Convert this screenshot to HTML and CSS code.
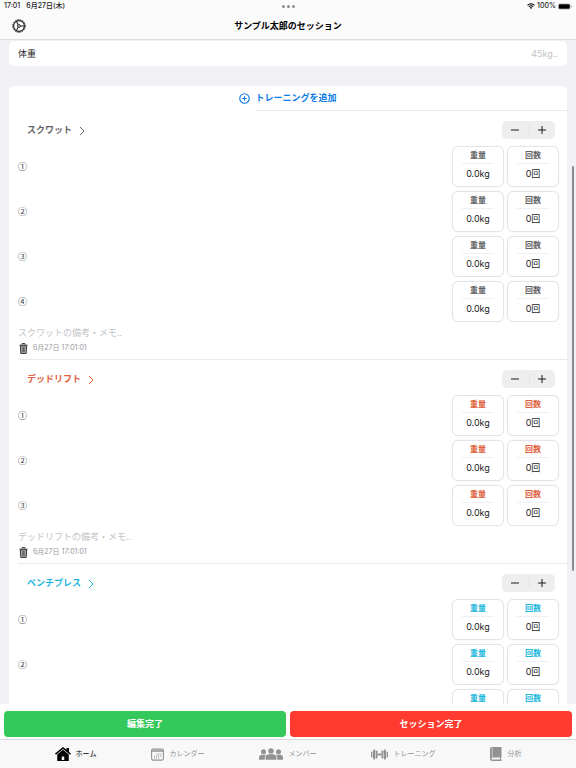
FILE: index.html
```html
<!DOCTYPE html>
<html lang="ja">
<head>
    <meta charset="UTF-8">
    <meta name="viewport" content="width=device-width, initial-scale=1.0">
    <title>サンプル太郎のセッション</title>
    <link rel="stylesheet" href="styles.css">
</head>
<body>
    <div class="app">
        <header class="header">
            <div class="status-bar">
                <div class="status-left"><span>17:01</span><span>6月27日(木)</span></div>
                <div class="status-dots"><i></i><i></i><i></i></div>
                <div class="status-right">
                    <svg class="wifi" viewBox="0 0 16 12" fill="none" stroke="#111" stroke-width="2.2"><path d="M1 4.6a10 10 0 0 1 14 0M3.8 7.6a6 6 0 0 1 8.4 0"/><path d="M5.6 9.3a3.4 3.4 0 0 1 4.8 0L8 11.8z" fill="#111" stroke="none"/></svg>
                    <span>100%</span>
                    <svg class="battery" viewBox="0 0 28 12"><rect x=".5" y=".5" width="24" height="11" rx="3" fill="none" stroke="#999"/><rect x="1.500" y="1.500" width="22" height="9" rx="2" fill="#000"/><path d="M26 4v4q1.600-.5 1.600-2T26 4z" fill="#999"/></svg>
                </div>
            </div>
            <div class="title-bar">
                <button class="icon-btn" aria-label="設定">
                    <svg class="gear" viewBox="0 0 26 26" fill="none" stroke="#1c1c1e"><circle cx="13" cy="13" r="11.600" stroke-width="1.800" stroke-dasharray="3 1.550"/><circle cx="13" cy="13" r="10" stroke-width="2"/><circle cx="13" cy="13" r="2.600" stroke-width="1.800"/><path d="M15.800 13h6.800M11.600 10.600 8.200 4.700M11.600 15.400l-3.400 5.900" stroke-width="1.900"/></svg>
                </button>
                <h1>サンプル太郎のセッション</h1>
            </div>
        </header>

        <div class="scroll-area">
            <main class="content">
                <div class="card weight-row">
                    <label for="bodyWeight">体重</label>
                    <input id="bodyWeight" type="text" placeholder="45kg..">
                </div>

                <div class="card">
                    <button class="add-btn">
                        <svg viewBox="0 0 20 20" fill="none" stroke="currentColor" stroke-width="2"><circle cx="10" cy="10" r="8.600"/><path d="M10 6v8M6 10h8"/></svg>
                        トレーニングを追加
                    </button>

                    <section class="exercise squat">
                        <div class="exercise-head">
                            <a href="#">スクワット <svg class="chevron" viewBox="0 0 12 20"><path d="M2 2l8 8-8 8"/></svg></a>
                            <div class="stepper"><button aria-label="セットを減らす"><svg viewBox="0 0 16 16"><path d="M0 8h16"/></svg></button><button aria-label="セットを増やす"><svg viewBox="0 0 16 16"><path d="M0 8h16M8 0v16"/></svg></button></div>
                        </div>
                        <div class="sets">
                            <div class="set">
                                <span class="set-no">①</span>
                                <label class="field"><span>重量</span><input type="text" value="0.0kg"></label>
                                <label class="field"><span>回数</span><input type="text" value="0回"></label>
                            </div>
                            <div class="set">
                                <span class="set-no">②</span>
                                <label class="field"><span>重量</span><input type="text" value="0.0kg"></label>
                                <label class="field"><span>回数</span><input type="text" value="0回"></label>
                            </div>
                            <div class="set">
                                <span class="set-no">③</span>
                                <label class="field"><span>重量</span><input type="text" value="0.0kg"></label>
                                <label class="field"><span>回数</span><input type="text" value="0回"></label>
                            </div>
                            <div class="set">
                                <span class="set-no">④</span>
                                <label class="field"><span>重量</span><input type="text" value="0.0kg"></label>
                                <label class="field"><span>回数</span><input type="text" value="0回"></label>
                            </div>
                        </div>
                        <input class="memo" type="text" aria-label="スクワットの備考・メモ" placeholder="スクワットの備考・メモ..">
                        <div class="exercise-foot">
                            <button class="icon-btn" aria-label="削除"><svg class="trash" viewBox="0 0 20 24"><use href="#trash"/></svg></button>
                            <time>6月27日 17:01:01</time>
                        </div>
                    </section>

                    <section class="exercise deadlift">
                        <div class="exercise-head">
                            <a href="#">デッドリフト <svg class="chevron" viewBox="0 0 12 20"><path d="M2 2l8 8-8 8"/></svg></a>
                            <div class="stepper"><button aria-label="セットを減らす"><svg viewBox="0 0 16 16"><path d="M0 8h16"/></svg></button><button aria-label="セットを増やす"><svg viewBox="0 0 16 16"><path d="M0 8h16M8 0v16"/></svg></button></div>
                        </div>
                        <div class="sets">
                            <div class="set">
                                <span class="set-no">①</span>
                                <label class="field"><span>重量</span><input type="text" value="0.0kg"></label>
                                <label class="field"><span>回数</span><input type="text" value="0回"></label>
                            </div>
                            <div class="set">
                                <span class="set-no">②</span>
                                <label class="field"><span>重量</span><input type="text" value="0.0kg"></label>
                                <label class="field"><span>回数</span><input type="text" value="0回"></label>
                            </div>
                            <div class="set">
                                <span class="set-no">③</span>
                                <label class="field"><span>重量</span><input type="text" value="0.0kg"></label>
                                <label class="field"><span>回数</span><input type="text" value="0回"></label>
                            </div>
                        </div>
                        <input class="memo" type="text" aria-label="デッドリフトの備考・メモ" placeholder="デッドリフトの備考・メモ..">
                        <div class="exercise-foot">
                            <button class="icon-btn" aria-label="削除"><svg class="trash" viewBox="0 0 20 24"><use href="#trash"/></svg></button>
                            <time>6月27日 17:01:01</time>
                        </div>
                    </section>

                    <section class="exercise bench">
                        <div class="exercise-head">
                            <a href="#">ベンチプレス <svg class="chevron" viewBox="0 0 12 20"><path d="M2 2l8 8-8 8"/></svg></a>
                            <div class="stepper"><button aria-label="セットを減らす"><svg viewBox="0 0 16 16"><path d="M0 8h16"/></svg></button><button aria-label="セットを増やす"><svg viewBox="0 0 16 16"><path d="M0 8h16M8 0v16"/></svg></button></div>
                        </div>
                        <div class="sets">
                            <div class="set">
                                <span class="set-no">①</span>
                                <label class="field"><span>重量</span><input type="text" value="0.0kg"></label>
                                <label class="field"><span>回数</span><input type="text" value="0回"></label>
                            </div>
                            <div class="set">
                                <span class="set-no">②</span>
                                <label class="field"><span>重量</span><input type="text" value="0.0kg"></label>
                                <label class="field"><span>回数</span><input type="text" value="0回"></label>
                            </div>
                            <div class="set">
                                <span class="set-no"></span>
                                <label class="field"><span>重量</span><input type="text"></label>
                                <label class="field"><span>回数</span><input type="text"></label>
                            </div>
                        </div>
                    </section>
                </div>
            </main>
            <div class="scroll-thumb"></div>
        </div>

        <div class="actions">
            <button class="edit-done">編集完了</button>
            <button class="session-done">セッション完了</button>
        </div>

        <nav class="tabs">
            <a href="#" class="active">
                <svg width="16" height="14" viewBox="0 0 32 28" fill="currentColor"><path d="M16 0 0 13l2 2.400L16 4l14 11.400 2-2.400-4-3.200V2h-5v3.700z"/><path fill-rule="evenodd" d="M16 5.500 4.500 15V28h23V15zM13.500 19h5v7h-5z"/></svg>
                ホーム
            </a>
            <a href="#">
                <svg width="13" height="13" viewBox="0 0 26 26" fill="none" stroke="currentColor"><rect x="1.200" y="2.200" width="23.600" height="22" rx="3" stroke-width="2.200"/><path d="M1 6h24" stroke-width="3"/><path d="M11 12h10M6 16h15M6 20h11" stroke-width="2.200" stroke-dasharray="2.200 1.800"/></svg>
                カレンダー
            </a>
            <a href="#">
                <svg width="24" height="12" viewBox="0 0 48 24" fill="currentColor"><circle cx="24" cy="6" r="5.500"/><circle cx="9" cy="7.500" r="5"/><circle cx="39" cy="7.500" r="5"/><path d="M13 23.500V20q0-7.500 7.500-7.500h7q7.500 0 7.500 7.500v3.500z"/><path d="M0 23.500V20q0-6.500 6-6.500h8q-2.500 2.500-2.500 6v4zM48 23.500V20q0-6.500-6-6.500h-8q2.500 2.500 2.500 6v4z"/></svg>
                メンバー
            </a>
            <a href="#">
                <svg width="17" height="11" viewBox="0 0 34 22" fill="currentColor"><rect x="0" y="5" width="2.800" height="12" rx="1.400"/><rect x="4" y="1" width="4.500" height="20" rx="2"/><rect x="9.500" y="3" width="3.500" height="16" rx="1.500"/><rect x="13" y="9" width="8" height="4"/><rect x="21" y="3" width="3.500" height="16" rx="1.500"/><rect x="25.500" y="1" width="4.500" height="20" rx="2"/><rect x="31.200" y="5" width="2.800" height="12" rx="1.400"/></svg>
                トレーニング
            </a>
            <a href="#">
                <svg width="12" height="14" viewBox="0 0 24 28" fill="currentColor"><path d="M4 0h19v21H5q-2 0-2 2t2 2h18v3H5q-5 0-5-5V4q0-4 4-4z"/><path d="M20 20h2v6h-2z"/><path d="M4.500 1v19" stroke="#f8f8f8" stroke-width="1"/></svg>
                分析
            </a>
        </nav>
    </div>

    <svg class="defs" width="0" height="0">
        <symbol id="trash" viewBox="0 0 20 24">
            <path d="M7 3V1h6v2M1 4.500h18" fill="none" stroke="#222" stroke-width="2"/>
            <path d="M3 6h14l-1 17H4z" fill="#bbb" stroke="#222" stroke-width="2"/>
            <path d="M7.200 8.500l.4 12M10 8.500v12M12.800 8.500l-.4 12" stroke="#222" stroke-width="1.200"/>
        </symbol>
    </svg>
</body>
</html>
```
FILE: styles.css
```css
* {
    box-sizing: border-box;
}
body {
    margin: 0;
    font-family: Inter, "Noto Sans CJK JP", sans-serif;
    font-size: 9px;
    line-height: 12px;
    color: #1c1c1e;
}
button, input {
    font: inherit;
    color: inherit;
    border: none;
    padding: 0;
    margin: 0;
    background: none;
}
button {
    cursor: pointer;
}
a {
    color: inherit;
    text-decoration: none;
}
svg {
    display: block;
    flex-shrink: 0;
}
.defs {
    position: absolute;
}
.app {
    display: flex;
    flex-direction: column;
    height: 100vh;
    background: #fff;
}

/* header */
.header {
    background: #fbfbfc;
    border-bottom: 1px solid #dcdcde;
}
.status-bar {
    display: grid;
    grid-template-columns: 1fr auto 1fr;
    align-items: center;
    height: 12px;
    padding: 0 4px;
    font-size: 7px;
    font-weight: 500;
}
.status-left {
    display: flex;
    gap: 6px;
}
.status-dots {
    display: flex;
    gap: 2px;
}
.status-dots i {
    width: 3px;
    height: 3px;
    border-radius: 50%;
    background: #8e8e93;
}
.status-right {
    display: flex;
    justify-content: flex-end;
    align-items: center;
    gap: 2px;
}
.wifi {
    width: 8px;
    height: 6px;
}
.battery {
    width: 14px;
    height: 7px;
}
.title-bar {
    display: grid;
    grid-template-columns: 1fr auto 1fr;
    align-items: center;
    height: 27px;
    padding: 0 12px;
}
.gear {
    width: 14px;
    height: 14px;
}
h1 {
    margin: 0;
    font-size: 9px;
    font-weight: 700;
    color: #000;
}

/* content */
.scroll-area {
    position: relative;
    flex: 1;
    min-height: 0;
    background: #f1f1f5;
}
.content {
    height: 100%;
    padding: 1px 9px 0;
    overflow-y: auto;
    scrollbar-width: none;
}
.scroll-thumb {
    position: absolute;
    top: 19%;
    right: 2px;
    width: 2px;
    height: 61%;
    border-radius: 1px;
    background: #8c8c90;
}
.card {
    margin-bottom: 20px;
    border-radius: 5px;
    background: #fff;
}
.weight-row {
    display: flex;
    justify-content: space-between;
    align-items: center;
    height: 25px;
    padding: 0 9px;
}
.weight-row input {
    text-align: right;
}
input::placeholder {
    color: #c4c4c7;
    opacity: 1;
}
.add-btn {
    display: flex;
    justify-content: center;
    align-items: center;
    gap: 5px;
    width: 100%;
    height: 24px;
    color: #0a7be8;
    font-weight: 700;
}
.add-btn svg {
    width: 11px;
    height: 11px;
}
.exercise {
    position: relative;
    padding: 10px 8px 5px 9px;
}
/* separator is inset on the left only */
.exercise::before {
    content: "";
    position: absolute;
    top: 0;
    left: 9px;
    right: 0;
    height: 1px;
    background: #e9e9eb;
}
.squat::before {
    left: 247px;
}
.squat {
    --accent: #636366;
}
.deadlift {
    --accent: #e0603c;
}
.bench {
    --accent: #1cb8dc;
}
.exercise-head {
    display: flex;
    justify-content: space-between;
    align-items: center;
    height: 19px;
    padding: 0 4px 0 9px;
    color: var(--accent);
    font-weight: 700;
}
.exercise-head a {
    display: flex;
    align-items: center;
    gap: 7px;
}
.chevron {
    width: 6px;
    height: 10px;
    margin-top: 2px;
    fill: none;
    stroke: currentColor;
    stroke-width: 2;
}
.stepper {
    display: flex;
    width: 53px;
    height: 18px;
    border-radius: 5px;
    background: #eeeeef;
}
.stepper button {
    display: flex;
    flex: 1;
    justify-content: center;
    align-items: center;
}
.stepper button + button {
    position: relative;
}
.stepper button + button::before {
    content: "";
    position: absolute;
    left: 0;
    width: 1px;
    height: 10px;
    background: #e3e3e5;
}
.stepper svg {
    width: 8px;
    height: 8px;
    stroke: #1c1c1e;
    stroke-width: 2;
}
.sets {
    display: flex;
    flex-direction: column;
    gap: 4px;
    margin-top: 7px;
}
.set {
    display: flex;
    align-items: center;
    gap: 3px;
}
.set-no {
    flex: 1;
    color: #3a3a3c;
    font-family: "Noto Sans CJK JP", sans-serif;
}
.field {
    display: flex;
    flex-direction: column;
    align-items: center;
    width: 52px;
    height: 41px;
    padding-top: 2px;
    border: 1px solid #e4e4e6;
    border-radius: 6px;
    box-shadow: 0 0 1px #e2e2e4;
}
.field span {
    width: 32px;
    height: 15px;
    border-bottom: 1px solid #f0f0f2;
    color: var(--accent);
    font-size: 8px;
    font-weight: 700;
    text-align: center;
}
.field input {
    width: 100%;
    height: 12px;
    margin-top: 4px;
    text-align: center;
}
.memo {
    display: block;
    width: 100%;
    height: 12px;
    margin-top: 5px;
}
.exercise-foot {
    display: flex;
    align-items: center;
    gap: 5px;
    height: 12px;
    margin-top: 3px;
    padding-left: 1px;
    color: #98989b;
    font-size: 7px;
}
.trash {
    width: 9px;
    height: 11px;
}

/* bottom */
.actions {
    display: flex;
    gap: 4px;
    padding: 7px 4px 2px;
    background: #fff;
}
.actions button {
    flex: 1;
    height: 26px;
    border-radius: 4px;
    color: #fff;
    font-weight: 700;
}
.edit-done {
    background: #34c759;
}
.session-done {
    background: #ff3b30;
}
.tabs {
    display: flex;
    justify-content: center;
    align-items: center;
    gap: 55px;
    height: 29px;
    border-top: 1px solid #d8d8da;
    background: #f8f8f8;
    color: #929295;
    font-size: 7px;
}
.tabs a {
    display: flex;
    align-items: center;
    gap: 5px;
    white-space: nowrap;
}
.tabs .active {
    color: #000;
}
```
